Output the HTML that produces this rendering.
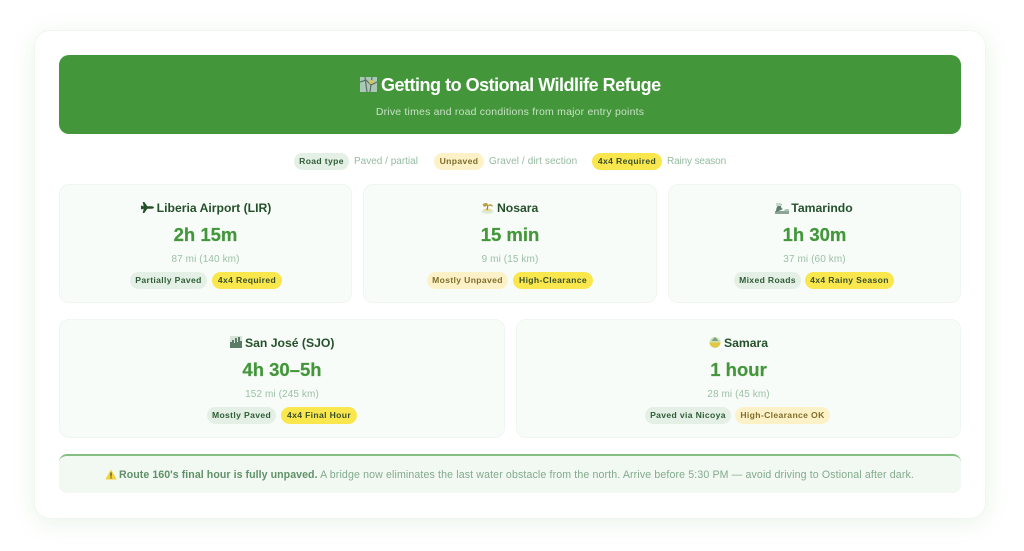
<!DOCTYPE html>
<html lang="en"><head><meta charset="utf-8"><title>Getting to Ostional Wildlife Refuge</title>
<style>
html,body{margin:0;padding:0;background:#fff}
body{position:relative;width:1024px;height:551px;overflow:hidden;font-family:"Liberation Sans",sans-serif;filter:blur(.3px)}
div,span.a,svg{position:absolute;white-space:nowrap}
.outer{left:34px;top:30px;width:950px;height:487px;background:#fff;border:1px solid #f0f6f0;border-radius:16px;box-shadow:0 4px 24px rgba(67,151,58,.11)}
.head{left:59px;top:55px;width:902px;height:79px;background:#43973a;border-radius:10px}
.title{left:381px;top:75px;width:290px;height:21px;line-height:21px;color:#fff;font-size:18px;font-weight:bold;text-align:left;letter-spacing:-.49px}
.sub{left:59px;top:105px;width:902px;height:14px;line-height:14px;text-align:center;color:#c7e0c4;font-size:10.5px;letter-spacing:.2px}
.card{background:#f8fcf9;border:1px solid #eff6f0;border-radius:10px;box-sizing:border-box;height:119px}
.name{height:16px;line-height:16px;font-size:12.2px;font-weight:bold;color:#25512a;text-align:center}
.time{height:22px;line-height:22px;font-size:18.5px;font-weight:bold;color:#43973a;text-align:center;-webkit-text-stroke:.2px #43973a}
.dist{height:14px;line-height:14px;font-size:10px;color:#9cc0a6;text-align:center;letter-spacing:.1px}
.p{height:17px;line-height:17px;border-radius:9px;text-align:center;font-size:8.6px;font-weight:bold;letter-spacing:.35px}
.g{background:#e4f0e6;color:#2f5c36}
.u{background:#fdf1c8;color:#7f6f2a}
.r{background:#fae64d;color:#38502b}
.lt{top:155px;height:14px;line-height:14px;font-size:10px;color:#94bb9f}
.note{left:59px;top:454px;width:902px;height:39px;box-sizing:border-box;background:#f2f8f2;border-top:2px solid #83bf80;border-radius:8px}
.nt{left:119px;top:468px;width:800px;height:14px;line-height:14px;font-size:10.6px;color:#82ab8c;letter-spacing:.13px}
.nt b{color:#5f9168;letter-spacing:.06px}
</style></head><body>
<div class="outer"></div>
<div class="head"></div>
<svg style="left:360px;top:77px" width="17" height="15" viewBox="0 0 17 15"><rect width="17" height="15" fill="#a9c9b4"/><path d="M0 5L6 3 11 8 17 5M5 0L7 15M12 0L10 15" stroke="#5d6f66" stroke-width="1.2" fill="none"/><circle cx="11" cy="5" r="2" fill="#d8c84a"/></svg>
<div class="title">Getting to Ostional Wildlife Refuge</div>
<div class="sub">Drive times and road conditions from major entry points</div>

<div class="p g" style="left:294px;top:153px;width:55px">Road type</div>
<div class="lt" style="left:354px;width:66px">Paved / partial</div>
<div class="p u" style="left:434px;top:153px;width:50px">Unpaved</div>
<div class="lt" style="left:489px;width:90px;letter-spacing:.1px">Gravel / dirt section</div>
<div class="p r" style="left:592px;top:153px;width:70px">4x4 Required</div>
<div class="lt" style="left:667px;width:60px;letter-spacing:-.13px">Rainy season</div>

<div class="card" style="left:59px;top:184px;width:293px"></div>
<svg style="left:141px;top:201px" width="13" height="13" viewBox="0 0 13 13"><path d="M0 4.800H1.500L2.700 5.400 1.700 1H3.300L6.300 5.200H10.500C12 5.200 13 6 13 6.500S12 7.800 10.500 7.800H6.300L3.300 12H1.700L2.700 7.600 1.500 8.200H0Z" fill="#25512a"/></svg>
<div class="name" style="left:156px;top:200px;width:116px">Liberia Airport (LIR)</div>
<div class="time" style="left:59px;top:224px;width:293px">2h 15m</div>
<div class="dist" style="left:59px;top:253px;width:293px">87 mi (140 km)</div>
<div class="p g" style="left:130px;top:272px;width:77px">Partially Paved</div>
<div class="p r" style="left:212px;top:272px;width:70px">4x4 Required</div>

<div class="card" style="left:363px;top:184px;width:294px"></div>
<svg style="left:481px;top:202px" width="13" height="12" viewBox="0 0 13 12"><ellipse cx="6.500" cy="9.500" rx="6" ry="2.300" fill="#d9ecd9"/><ellipse cx="6.500" cy="8" rx="4.500" ry="1.500" fill="#ecdca0"/><path d="M6 8L7 3" stroke="#9a7a3a" stroke-width="1.200"/><path d="M1.500 2.500C3.500.5 7 .5 7 3 9 1.500 12 2.500 12 4.500L7 3.500 3 5Z" fill="#b9a243"/></svg>
<div class="name" style="left:497px;top:200px;width:41px">Nosara</div>
<div class="time" style="left:363px;top:224px;width:294px">15 min</div>
<div class="dist" style="left:363px;top:253px;width:294px">9 mi (15 km)</div>
<div class="p u" style="left:427px;top:272px;width:81px">Mostly Unpaved</div>
<div class="p r" style="left:513px;top:272px;width:80px">High-Clearance</div>

<div class="card" style="left:668px;top:184px;width:293px"></div>
<svg style="left:775px;top:202px" width="14" height="12" viewBox="0 0 14 12"><rect y="9" width="14" height="3" fill="#8aa594"/><path d="M1 10C1 5 3 2 7 2 5 4 6 6 8 7 6 8 4 9 1 10Z" fill="#5e7d6a"/><path d="M9 9H14V7H10Z" fill="#b5c9bb"/><rect x="1" y="1" width="5" height="3" fill="#c8d8cd"/></svg>
<div class="name" style="left:791px;top:200px;width:62px">Tamarindo</div>
<div class="time" style="left:668px;top:224px;width:293px">1h 30m</div>
<div class="dist" style="left:668px;top:253px;width:293px">37 mi (60 km)</div>
<div class="p g" style="left:734px;top:272px;width:67px">Mixed Roads</div>
<div class="p r" style="left:805px;top:272px;width:89px">4x4 Rainy Season</div>

<div class="card" style="left:59px;top:319px;width:446px"></div>
<svg style="left:230px;top:336px" width="12" height="12" viewBox="0 0 12 12"><rect width="12" height="12" fill="#d5e3d8"/><path d="M0 12V6H2V4H4V7H5V2H7V6H8V1H10V5H12V12Z" fill="#5c7b66"/></svg>
<div class="name" style="left:245px;top:335px;width:89px">San José (SJO)</div>
<div class="time" style="left:59px;top:359px;width:446px">4h 30–5h</div>
<div class="dist" style="left:59px;top:388px;width:446px">152 mi (245 km)</div>
<div class="p g" style="left:207px;top:407px;width:69px">Mostly Paved</div>
<div class="p r" style="left:281px;top:407px;width:76px">4x4 Final Hour</div>

<div class="card" style="left:516px;top:319px;width:445px"></div>
<svg style="left:709px;top:336px" width="12" height="12" viewBox="0 0 12 12"><circle cx="6" cy="6.500" r="5.500" fill="#cfe3b0"/><path d="M.5 6.500A5.500 5 0 0 0 11.500 6.500Z" fill="#e3c83f"/><path d="M2.500 5L6 1 9.500 5Z" fill="#7d9c8a"/></svg>
<div class="name" style="left:724px;top:335px;width:44px">Samara</div>
<div class="time" style="left:516px;top:359px;width:445px">1 hour</div>
<div class="dist" style="left:516px;top:388px;width:445px">28 mi (45 km)</div>
<div class="p g" style="left:645px;top:407px;width:86px">Paved via Nicoya</div>
<div class="p u" style="left:735px;top:407px;width:95px">High-Clearance OK</div>

<div class="note"></div>
<svg style="left:105px;top:469px" width="12" height="11" viewBox="0 0 12 11"><path d="M6 .5L11.700 10.500H.3Z" fill="#f2d43a"/><rect x="5.400" y="3.500" width="1.200" height="4" fill="#4a4a2a"/><rect x="5.400" y="8.300" width="1.200" height="1.200" fill="#4a4a2a"/></svg>
<div class="nt"><b>Route 160's final hour is fully unpaved.</b> A bridge now eliminates the last water obstacle from the north. Arrive before 5:30 PM — avoid driving to Ostional after dark.</div>
</body></html>
